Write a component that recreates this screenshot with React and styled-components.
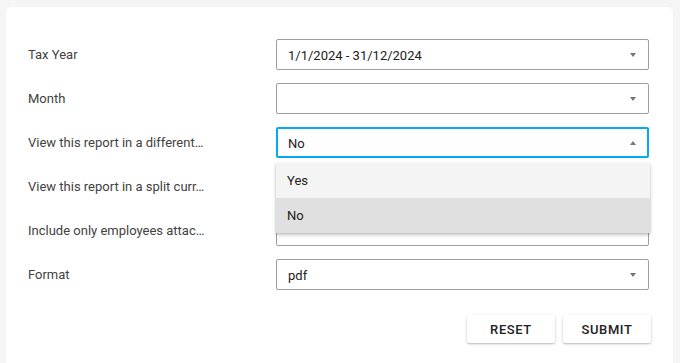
import React from 'react'
import styled, { createGlobalStyle } from 'styled-components'

const GlobalStyle = createGlobalStyle`
  html, body {
    margin: 0;
    padding: 0;
    background: #f5f5f5;
    font-family: Roboto, "Liberation Sans", sans-serif;
  }
`

const Page = styled.div`
  padding: 7px 7px 0 6px;
  height: 363px;
  box-sizing: border-box;
  overflow: hidden;
`

const Card = styled.div`
  background: #ffffff;
  border-radius: 6px;
  padding: 32px 24px 40px 22px;
  min-height: 400px;
  box-sizing: border-box;
`

const Form = styled.div`
  display: grid;
  grid-template-columns: 248px 1fr;
  row-gap: 13px;
  align-items: center;
`

const Label = styled.div`
  font-size: 13px;
  color: #424242;
  white-space: nowrap;
`

const Field = styled.div`
  position: relative;
`

const Select = styled.div`
  height: 31px;
  box-sizing: border-box;
  border: ${p => (p.$focused ? '2px solid #03a9f4' : '1px solid #9e9e9e')};
  border-radius: 2px;
  display: flex;
  align-items: center;
  padding: ${p => (p.$focused ? '1px 11px 0 10px' : '1px 12px 0 11px')};
  font-size: 13px;
  color: #212121;
`

const Value = styled.span`
  flex: 1;
`

const Arrow = styled.span`
  width: 0;
  height: 0;
  border-left: 3.5px solid transparent;
  border-right: 3.5px solid transparent;
  ${p =>
    p.$up
      ? 'border-bottom: 4px solid #757575;'
      : 'border-top: 4px solid #757575;'}
`

const Menu = styled.div`
  position: absolute;
  top: 36px;
  left: 0;
  right: -1px;
  background: #ffffff;
  box-shadow: 0 2px 4px rgba(0, 0, 0, 0.2), 0 1px 2px rgba(0, 0, 0, 0.12);
  z-index: 2;
`

const Option = styled.div`
  height: 35px;
  display: flex;
  align-items: center;
  padding-left: 11px;
  font-size: 13px;
  color: #212121;
  background: ${p => (p.$selected ? '#e0e0e0' : '#f4f4f4')};
`

const Actions = styled.div`
  display: flex;
  justify-content: flex-end;
  gap: 8px;
  margin-top: 25px;
  margin-right: -2px;
`

const Button = styled.button`
  width: 88px;
  height: 28px;
  border: none;
  border-radius: 2px;
  background: #ffffff;
  box-shadow: 0 1px 3px rgba(0, 0, 0, 0.22), 0 1px 1px rgba(0, 0, 0, 0.08);
  font-family: Roboto, "Liberation Sans", sans-serif;
  font-size: 13px;
  font-weight: 500;
  letter-spacing: 0.6px;
  text-transform: uppercase;
  color: #212121;
  cursor: pointer;
`

const fields = [
  { label: 'Tax Year', value: '1/1/2024 - 31/12/2024' },
  { label: 'Month', value: '' },
  { label: 'View this report in a different…', value: 'No', open: true },
  { label: 'View this report in a split curr…', value: '' },
  { label: 'Include only employees attac…', value: '' },
  { label: 'Format', value: 'pdf' },
]

export default function App() {
  return (
    <Page>
      <GlobalStyle />
      <Card>
        <Form>
          {fields.map(f => (
            <React.Fragment key={f.label}>
              <Label>{f.label}</Label>
              <Field>
                <Select $focused={f.open}>
                  <Value>{f.value}</Value>
                  <Arrow $up={f.open} />
                </Select>
                {f.open && (
                  <Menu>
                    <Option>Yes</Option>
                    <Option $selected>No</Option>
                  </Menu>
                )}
              </Field>
            </React.Fragment>
          ))}
        </Form>
        <Actions>
          <Button>Reset</Button>
          <Button>Submit</Button>
        </Actions>
      </Card>
    </Page>
  )
}
